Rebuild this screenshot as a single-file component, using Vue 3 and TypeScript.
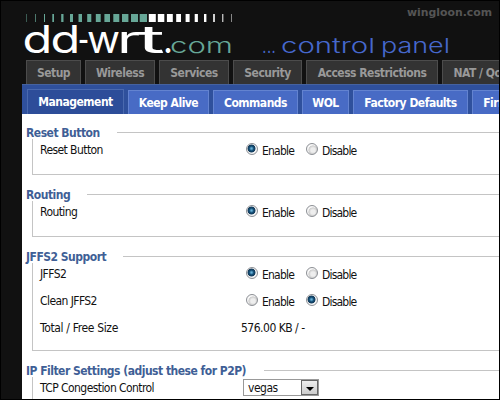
<script setup lang="ts">
interface Tab { label: string; width: number; active?: boolean }
interface Row { label: string; choice?: 'Enable' | 'Disable'; text?: string; select?: string }
interface Section { title: string; gap: number; height: number; rows: Row[] }

const mainTabs: Tab[] = [
  { label: 'Setup', width: 55 },
  { label: 'Wireless', width: 70 },
  { label: 'Services', width: 70 },
  { label: 'Security', width: 69 },
  { label: 'Access Restrictions', width: 132 },
  { label: 'NAT / QoS', width: 78 },
]
const subTabs: Tab[] = [
  { label: 'Management', width: 97, active: true },
  { label: 'Keep Alive', width: 81 },
  { label: 'Commands', width: 85 },
  { label: 'WOL', width: 47 },
  { label: 'Factory Defaults', width: 115 },
  { label: 'Firmware', width: 76 },
]
const sections: Section[] = [
  { title: 'Reset Button', gap: 91, height: 62, rows: [{ label: 'Reset Button', choice: 'Enable' }] },
  { title: 'Routing', gap: 61, height: 62, rows: [{ label: 'Routing', choice: 'Enable' }] },
  {
    title: 'JFFS2 Support', gap: 97, height: 114,
    rows: [
      { label: 'JFFS2', choice: 'Enable' },
      { label: 'Clean JFFS2', choice: 'Disable' },
      { label: 'Total / Free Size', text: '576.00 KB / -' },
    ],
  },
  {
    title: 'IP Filter Settings (adjust these for P2P)', gap: 238, height: 62,
    rows: [{ label: 'TCP Congestion Control', select: 'vegas' }],
  },
]
const options: Array<'Enable' | 'Disable'> = ['Enable', 'Disable']

// Logo strip: bars widen toward the middle, then narrow again.
const greenBars: [number, number][] = [
  [26.3, 0.5], [35.1, 0.7], [44, 1], [52.3, 1.7], [61.2, 2.3], [70, 3], [78.5, 3.5],
  [87.2, 4.1], [95.8, 4.9], [104.4, 5.6], [113.3, 6], [122, 6.4], [131, 7], [139.7, 7.3],
]
const whiteBars: [number, number][] = [
  [148.8, 7], [157.8, 6.5], [166.9, 5.9], [176.2, 4.8], [185.6, 4], [194.7, 3.2],
  [204, 2.4], [213.2, 1.6], [222.3, 1], [231.5, 0.5],
]
</script>

<template>
  <div class="page">
    <svg class="banner" width="498" height="59" viewBox="1 1 498 59">
      <rect v-for="b in greenBars" :key="b[0]" :x="b[0]" y="14" :width="b[1]" height="8" fill="#67a797" />
      <rect v-for="b in whiteBars" :key="b[0]" :x="b[0]" y="14" :width="b[1]" height="8" fill="#fff" />
      <text class="logo" transform="translate(22.5 53) scale(1.28 1)" x="0 21.8">dd</text>
      <text class="logo" x="78" y="53" textLength="11" lengthAdjust="spacingAndGlyphs">-</text>
      <text class="logo" x="87" y="53" textLength="33" lengthAdjust="spacingAndGlyphs">w</text>
      <text class="logo" x="117" y="53" textLength="23" lengthAdjust="spacingAndGlyphs">r</text>
      <text class="logo" x="137" y="53" textLength="28" lengthAdjust="spacingAndGlyphs">t</text>
      <text class="logo" x="163" y="53" textLength="10" lengthAdjust="spacingAndGlyphs">.</text>
      <text class="com" transform="translate(170 53) scale(1.4 1)" textLength="45" lengthAdjust="spacingAndGlyphs">com</text>
      <text class="panel" x="262" y="53" textLength="14" lengthAdjust="spacingAndGlyphs">...</text>
      <text class="panel" x="281" y="53" textLength="94" lengthAdjust="spacingAndGlyphs">control</text>
      <text class="panel" x="381" y="53" textLength="69" lengthAdjust="spacingAndGlyphs">panel</text>
      <text class="site" x="407" y="16" textLength="85" lengthAdjust="spacingAndGlyphs">wingloon.com</text>
    </svg>
    <nav class="tabs main">
      <span v-for="t in mainTabs" :key="t.label" class="tab" :style="{ width: t.width + 'px' }">{{ t.label }}</span>
    </nav>
    <nav class="tabs sub">
      <span v-for="t in subTabs" :key="t.label" class="tab" :class="{ active: t.active }" :style="{ width: t.width + 'px' }">{{ t.label }}</span>
    </nav>
    <main class="content">
      <section v-for="s in sections" :key="s.title" class="section" :style="{ height: s.height + 'px' }">
        <header class="head">
          <h2 :style="{ width: s.gap + 'px' }">{{ s.title }}</h2>
          <i class="rule"></i>
        </header>
        <div class="body">
          <div v-for="r in s.rows" :key="r.label" class="row">
            <span class="label" :class="{ wide: r.text }">{{ r.label }}</span>
            <template v-if="r.choice">
              <span v-for="o in options" :key="o" class="option">
                <i class="radio" :class="{ on: r.choice === o }"></i><span class="name">{{ o }}</span>
              </span>
            </template>
            <span v-else-if="r.text" class="value">{{ r.text }}</span>
            <span v-else class="select">
              <span>{{ r.select }}</span>
              <span class="arrow"><svg width="8" height="4" viewBox="0 0 8 4"><path d="M0 0h8L4 4z" /></svg></span>
            </span>
          </div>
        </div>
      </section>
    </main>
  </div>
</template>

<style>
body { margin: 0; overflow: hidden; background: #000; }
</style>

<style scoped>
.page {
  box-sizing: border-box;
  width: 500px;
  height: 400px;
  border: 1px solid #000;
  background: #111;
  overflow: hidden;
  display: flex;
  flex-direction: column;
  font: 12px "DejaVu Sans Condensed", "DejaVu Sans", sans-serif;
  font-stretch: condensed;
  letter-spacing: -0.5px;
}
.banner { display: block; flex: none; letter-spacing: 0; font-stretch: normal; }
.logo { font: 400 38px Inter, sans-serif; fill: #fff; }
.com { font: 300 22px Inter, sans-serif; fill: #67a797; }
.panel { font: 300 20.5px Inter, sans-serif; fill: #4668cc; }
.site { font: 900 11px "DejaVu Sans", sans-serif; fill: #555; }
.tabs { display: flex; gap: 4px; flex: none; overflow: hidden; font-weight: bold; }
.tab { box-sizing: border-box; flex: none; text-align: center; white-space: nowrap; }
.main { height: 24px; padding-left: 25px; color: #999; }
.main .tab { background: #333; border: 1px solid #4c4c4c; border-bottom: 0; line-height: 25px; }
.sub {
  height: 30px;
  box-sizing: border-box;
  margin-left: 21px;
  padding: 5px 0 0 5px;
  background: #2f509c;
  border-top: 1px solid #45629f;
  color: #fff;
  align-items: flex-end;
}
.sub .tab { height: 24px; line-height: 25px; background: #486bc5; border: 1px solid #6383d0; border-bottom: 0; }
.sub .active { height: 25px; line-height: 24px; background: #2d4d99; border-color: #4a69ae; }
.content { flex: 1; margin-left: 21px; padding: 11px 0 0 4px; background: #fff; overflow: hidden; color: #111; }
.section { box-sizing: border-box; padding-bottom: 12px; display: flex; flex-direction: column; }
.head { display: flex; height: 14px; align-items: center; flex: none; }
h2 { margin: 0; padding-top: 2px; font-size: 12px; line-height: 16px; color: #3f5f96; white-space: nowrap; flex: none; }
.rule { flex: 1; height: 1px; background: #c4c4c4; }
.body { flex: 1; margin-left: 6px; border: solid #c4c4c4; border-width: 0 0 1px 1px; padding-left: 7px; }
.row { display: flex; align-items: center; height: 27px; }
.row:first-child { margin-top: -3px; }
.label { width: 206px; flex: none; white-space: nowrap; letter-spacing: -0.57px; }
.label.wide { letter-spacing: -0.35px; }
.option { display: flex; align-items: center; width: 60px; }
.radio {
  box-sizing: border-box;
  width: 12px;
  height: 12px;
  margin-top: -2px;
  border: 1px solid #8c8f94;
  border-radius: 50%;
  background: radial-gradient(circle at 60% 60%, #eee 0 25%, #ccc 50%, #f8f8f8 58%);
}
.radio.on { background: radial-gradient(circle at 45% 45%, #69b3da 0 6%, #155078 28%, #103858 46%, #f4f4f4 56%); }
.name { margin-left: 4px; padding-top: 3px; letter-spacing: -0.8px; }
.value { margin-left: -5px; }
.select {
  box-sizing: border-box;
  display: flex;
  justify-content: space-between;
  width: 76px;
  height: 17px;
  margin-left: -3px;
  padding-left: 4px;
  border: 1px solid #999;
  line-height: 16px;
}
.arrow {
  box-sizing: border-box;
  width: 17px;
  height: 15px;
  border: 1px solid #666;
  background: linear-gradient(#eee, #ccc);
  display: flex;
  align-items: center;
  justify-content: center;
  padding-top: 3px;
}
</style>
